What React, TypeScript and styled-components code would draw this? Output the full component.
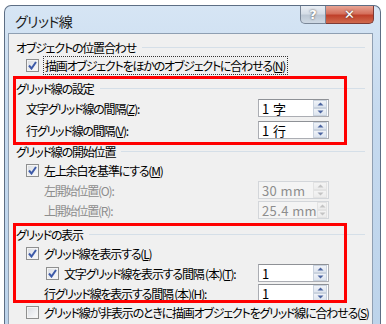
import React from 'react'
import styled, { createGlobalStyle } from 'styled-components'

const GlobalStyle = createGlobalStyle`
  html, body {
    margin: 0;
    padding: 0;
    background: #ffffff;
  }
  body {
    font-family: "Noto Sans CJK JP", "Liberation Sans", sans-serif;
    font-feature-settings: "palt";
    font-size: 12px;
    letter-spacing: -1.2px;
    color: #000;
  }
`

const Page = styled.div`
  width: 386px;
  height: 324px;
  overflow: hidden;
  padding: 5px 0 0 4px;
  box-sizing: border-box;
`

const Window = styled.div`
  width: 377px;
  height: 340px;
  box-sizing: border-box;
  border: 1px solid #5d6e84;
  border-bottom: none;
  border-radius: 7px 7px 0 0;
  background: linear-gradient(180deg, #d6e5f4 0%, #c6daef 30%, #bcd3ea 100%);
  padding: 0 7px 0 3px;
  display: flex;
  flex-direction: column;
`

const TitleBar = styled.div`
  height: 27px;
  display: flex;
  align-items: flex-start;
  justify-content: space-between;
`

const Title = styled.div`
  font-size: 14px;
  padding: 5px 0 0 7px;
  letter-spacing: -0.6px;
  color: #1b1b1b;
`

const CaptionButtons = styled.div`
  display: flex;
  margin-right: -1px;
`

const CaptionButton = styled.div<{ $close?: boolean }>`
  height: 18px;
  width: ${(p) => (p.$close ? '48px' : '26px')};
  box-sizing: border-box;
  border: 1px solid ${(p) => (p.$close ? '#7d3a35' : '#7a8798')};
  border-top: none;
  border-left: ${(p) => (p.$close ? 'none' : undefined)};
  border-radius: ${(p) => (p.$close ? '0 0 5px 0' : '0 0 0 5px')};
  background: ${(p) =>
    p.$close
      ? 'linear-gradient(180deg, #e8a494 0%, #d5705c 45%, #c0402a 55%, #d06a4e 100%)'
      : 'linear-gradient(180deg, #e9eef4 0%, #d5dde7 45%, #bcc7d4 55%, #cfd9e4 100%)'};
  color: #fff;
  display: flex;
  align-items: center;
  justify-content: center;
  font-family: "DejaVu Sans", sans-serif;
  font-weight: bold;
  font-size: 13px;
  letter-spacing: 0;
  text-shadow: 0 0 2px #333;
`

const Content = styled.div`
  flex: 1;
  background: #f0f0f0;
  border: 1px solid #8f9fb2;
  padding-top: 4px;
  display: flex;
  flex-direction: column;
`

const Section = styled.div<{ $gap?: number }>`
  position: relative;
  margin-top: ${(p) => p.$gap ?? 0}px;
  display: flex;
  flex-direction: column;
`

const Highlight = styled.div<{ $top: number; $height: number }>`
  position: absolute;
  left: 4px;
  top: ${(p) => p.$top}px;
  width: 334px;
  height: ${(p) => p.$height}px;
  box-sizing: border-box;
  border: 3px solid #ff0000;
  pointer-events: none;
`

const Header = styled.div`
  height: 18px;
  display: flex;
  align-items: center;
  padding: 0 7px 0 7px;
  white-space: nowrap;

  &::after {
    content: '';
    flex: 1;
    margin-left: 6px;
    border-top: 1px solid #d5dfe8;
  }
`

const Row = styled.div<{ $indent: number; $h?: number }>`
  height: ${(p) => p.$h ?? 20}px;
  display: flex;
  align-items: center;
  padding-left: ${(p) => p.$indent}px;
  padding-right: 43px;
  white-space: nowrap;
`

const Label = styled.span<{ $disabled?: boolean }>`
  color: ${(p) => (p.$disabled ? '#8d8d8d' : '#000')};
`

const Focus = styled.span`
  outline: 1px dotted #333;
  outline-offset: 0;
  padding: 0 2px 0 1px;
`

const Box = styled.span`
  width: 13px;
  height: 13px;
  box-sizing: border-box;
  border: 1px solid #8e8f8f;
  background: linear-gradient(135deg, #d8dbe0 0%, #eef0f3 60%, #fbfbfb 100%);
  box-shadow: inset 0 0 0 1px #f4f4f4;
  margin-right: 5px;
  display: inline-flex;
  align-items: center;
  justify-content: center;
  flex-shrink: 0;
`

const Input = styled.div<{ $disabled?: boolean }>`
  margin-left: auto;
  width: 71px;
  height: 18px;
  box-sizing: border-box;
  border: 1px solid ${(p) => (p.$disabled ? '#d3d6da' : '#abadb3')};
  border-top-color: ${(p) => (p.$disabled ? '#d3d6da' : '#8e9196')};
  background: ${(p) => (p.$disabled ? '#f4f4f4' : '#ffffff')};
  color: ${(p) => (p.$disabled ? '#8d8d8d' : '#000')};
  display: flex;
  align-items: center;
  padding-left: 3px;
  font-size: 13px;
  letter-spacing: 0.4px;
  flex-shrink: 0;
`

const Value = styled.span`
  flex: 1;
`

const Spin = styled.div`
  width: 14px;
  height: 16px;
  margin-right: 1px;
  display: flex;
  flex-direction: column;
`

const SpinHalf = styled.div<{ $disabled?: boolean }>`
  flex: 1;
  display: flex;
  align-items: center;
  justify-content: center;
  background: ${(p) =>
    p.$disabled
      ? 'linear-gradient(180deg, #f4f4f4, #ececec)'
      : 'linear-gradient(180deg, #f0f3f8, #dde4ee)'};
  border: 1px solid ${(p) => (p.$disabled ? '#e3e3e3' : '#c9d2de')};
  box-sizing: border-box;
`

const Check = ({ checked }: { checked?: boolean }) => (
  <Box>
    {checked && (
      <svg width="9" height="9" viewBox="0 0 9 9">
        <path d="M1 4.5 L3.5 7.5 L8 1" fill="none" stroke="#3d5aa8" strokeWidth="2" />
      </svg>
    )}
  </Box>
)

const Arrow = ({ up, disabled }: { up?: boolean; disabled?: boolean }) => (
  <svg width="7" height="4" viewBox="0 0 7 4">
    <path
      d={up ? 'M0.5 3.5 L3.5 0.5 L6.5 3.5 Z' : 'M0.5 0.5 L3.5 3.5 L6.5 0.5 Z'}
      fill={disabled ? '#c4c4c4' : '#4b64a0'}
    />
  </svg>
)

const SpinBox = ({ value, disabled }: { value: string; disabled?: boolean }) => (
  <Input $disabled={disabled}>
    <Value>{value}</Value>
    <Spin>
      <SpinHalf $disabled={disabled}>
        <Arrow up disabled={disabled} />
      </SpinHalf>
      <SpinHalf $disabled={disabled}>
        <Arrow disabled={disabled} />
      </SpinHalf>
    </Spin>
  </Input>
)

export default function App() {
  return (
    <>
      <GlobalStyle />
      <Page>
        <Window>
          <TitleBar>
            <Title>グリッド線</Title>
            <CaptionButtons>
              <CaptionButton>?</CaptionButton>
              <CaptionButton $close>✕</CaptionButton>
            </CaptionButtons>
          </TitleBar>
          <Content>
            <Section>
              <Header>オブジェクトの位置合わせ</Header>
              <Row $indent={17} $h={18}>
                <Check checked />
                <Focus>
                  描画オブジェクトをほかのオブジェクトに合わせる(<u>N</u>)
                </Focus>
              </Row>
            </Section>

            <Section $gap={5}>
              <Highlight $top={-3} $height={69} />
              <Header>グリッド線の設定</Header>
              <Row $indent={17} $h={22}>
                <Label>文字グリッド線の間隔(<u>Z</u>):</Label>
                <SpinBox value="1 字" />
              </Row>
              <Row $indent={17} $h={22}>
                <Label>行グリッド線の間隔(<u>V</u>):</Label>
                <SpinBox value="1 行" />
              </Row>
            </Section>

            <Section $gap={1}>
              <Header>グリッド線の開始位置</Header>
              <Row $indent={17}>
                <Check checked />
                <Label>左上余白を基準にする(<u>M</u>)</Label>
              </Row>
              <Row $indent={35}>
                <Label $disabled>左開始位置(O):</Label>
                <SpinBox value="30 mm" disabled />
              </Row>
              <Row $indent={35}>
                <Label $disabled>上開始位置(R):</Label>
                <SpinBox value="25.4 mm" disabled />
              </Row>
            </Section>

            <Section $gap={5}>
              <Highlight $top={-2} $height={80} />
              <Header>グリッドの表示</Header>
              <Row $indent={17}>
                <Check checked />
                <Label>グリッド線を表示する(<u>L</u>)</Label>
              </Row>
              <Row $indent={37}>
                <Check checked />
                <Label>文字グリッド線を表示する間隔 (本)(<u>T</u>):</Label>
                <SpinBox value="1" />
              </Row>
              <Row $indent={35}>
                <Label>行グリッド線を表示する間隔 (本)(<u>H</u>):</Label>
                <SpinBox value="1" />
              </Row>
            </Section>

            <Section>
              <Row $indent={17} $h={19}>
                <Check />
                <Label>グリッド線が非表示のときに描画オブジェクトをグリッド線に合わせる(<u>S</u>)</Label>
              </Row>
            </Section>
          </Content>
        </Window>
      </Page>
    </>
  )
}
